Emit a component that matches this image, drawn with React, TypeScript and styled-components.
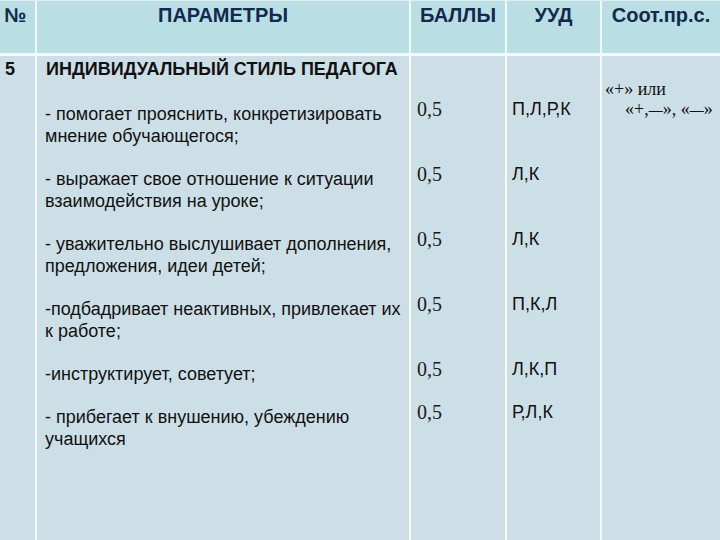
import React from "react";
import styled, { createGlobalStyle } from "styled-components";

const Global = createGlobalStyle`
  html, body { margin: 0; padding: 0; background: #cddfe6; }
  body { font-family: "Liberation Sans", Arial, sans-serif; }
`;

const COLS = "37px 374px 96px 95px 1fr";
const LINE = "rgba(255,255,255,0.8)";

const Table = styled.div`
  width: 720px;
  height: 540px;
  overflow: hidden;
  display: flex;
  flex-direction: column;
`;

const Header = styled.div`
  display: grid;
  grid-template-columns: ${COLS};
  height: 52px;
  background: #b9dee3;
  border-top: 1px solid #dff0f3;
  border-bottom: 3px solid #f4fafb;
  box-sizing: content-box;
`;

const HeadCell = styled.div<{ $left?: boolean }>`
  border-right: 2px solid ${LINE};
  padding: ${(p) => (p.$left ? "3px 0 0 4px" : "3px 0 0")};
  text-align: ${(p) => (p.$left ? "left" : "center")};
  font-weight: bold;
  font-size: 20px;
  line-height: 22px;
  color: #112a4e;
  white-space: nowrap;
  &:last-child { border-right: none; }
`;

const Body = styled.div`
  flex: 1;
  display: grid;
  grid-template-columns: ${COLS};
  grid-template-rows: 47px repeat(4, 65px) 43px 1fr;
  background: #cddfe6;
`;

const SpanCell = styled.div<{ $col: number; $last?: boolean }>`
  grid-column: ${(p) => p.$col};
  grid-row: 1 / -1;
  border-right: ${(p) => (p.$last ? "none" : `2px solid ${LINE}`)};
`;

const Cell = styled.div<{ $col: number }>`
  grid-column: ${(p) => p.$col};
  border-right: 2px solid ${LINE};
  min-width: 0;
`;

const Num = styled.div`
  padding: 2px 0 0 5px;
  font-weight: bold;
  font-size: 18px;
  line-height: 22px;
  color: #111;
`;

const Title = styled.div`
  padding: 2px 0 0 9px;
  font-weight: bold;
  font-size: 18px;
  line-height: 22px;
  color: #111;
  white-space: nowrap;
`;

const ItemText = styled.div`
  padding: 0 0 0 8px;
  font-size: 18px;
  line-height: 22px;
  color: #111;
  white-space: nowrap;
`;

const Score = styled.div`
  margin-top: -5px;
  padding-left: 6px;
  font-family: "Liberation Serif", "Times New Roman", serif;
  font-size: 20px;
  line-height: 22px;
  color: #1a1a1a;
`;

const Uud = styled.div`
  margin-top: -5px;
  padding-left: 5px;
  font-size: 18px;
  line-height: 22px;
  color: #111;
`;

const Note = styled.div`
  padding-top: 23px;
  font-family: "Liberation Serif", "Times New Roman", serif;
  font-size: 18px;
  line-height: 20px;
  color: #111;
`;

const NoteLine = styled.div<{ $indent: number }>`
  padding-left: ${(p) => p.$indent}px;
  white-space: nowrap;
`;

const Dash = styled.span`
  font-size: 14px;
  font-weight: bold;
`;

const items = [
  { text: ["- помогает прояснить, конкретизировать", "мнение обучающегося;"], uud: "П,Л,Р,К" },
  { text: ["- выражает свое отношение к ситуации", "взаимодействия на уроке;"], uud: "Л,К" },
  { text: ["- уважительно выслушивает дополнения,", "предложения, идеи детей;"], uud: "Л,К" },
  { text: ["-подбадривает неактивных, привлекает их", "к работе;"], uud: "П,К,Л" },
  { text: ["-инструктирует, советует;"], uud: "Л,К,П" },
  { text: ["- прибегает к внушению, убеждению", "учащихся"], uud: "Р,Л,К" },
];

export default function App() {
  return (
    <>
      <Global />
      <Table>
        <Header>
          <HeadCell $left>№</HeadCell>
          <HeadCell>ПАРАМЕТРЫ</HeadCell>
          <HeadCell>БАЛЛЫ</HeadCell>
          <HeadCell>УУД</HeadCell>
          <HeadCell>Соот.пр.с.</HeadCell>
        </Header>
        <Body>
          <SpanCell $col={1}>
            <Num>5</Num>
          </SpanCell>
          <Cell $col={2} style={{ gridRow: 1 }}>
            <Title>ИНДИВИДУАЛЬНЫЙ СТИЛЬ ПЕДАГОГА</Title>
          </Cell>
          <Cell $col={3} style={{ gridRow: 1 }} />
          <Cell $col={4} style={{ gridRow: 1 }} />
          {items.map((it, i) => (
            <React.Fragment key={i}>
              <Cell $col={2} style={{ gridRow: i + 2 }}>
                <ItemText>
                  {it.text.map((t, j) => (
                    <div key={j}>{t}</div>
                  ))}
                </ItemText>
              </Cell>
              <Cell $col={3} style={{ gridRow: i + 2 }}>
                <Score>0,5</Score>
              </Cell>
              <Cell $col={4} style={{ gridRow: i + 2 }}>
                <Uud>{it.uud}</Uud>
              </Cell>
            </React.Fragment>
          ))}
          <Cell $col={2} style={{ gridRow: 8 }} />
          <Cell $col={3} style={{ gridRow: 8 }} />
          <Cell $col={4} style={{ gridRow: 8 }} />
          <SpanCell $col={5} $last>
            <Note>
              <NoteLine $indent={3}>«+» или</NoteLine>
              <NoteLine $indent={23}>
                «+,<Dash>—</Dash>», «<Dash>—</Dash>»
              </NoteLine>
            </Note>
          </SpanCell>
        </Body>
      </Table>
    </>
  );
}
